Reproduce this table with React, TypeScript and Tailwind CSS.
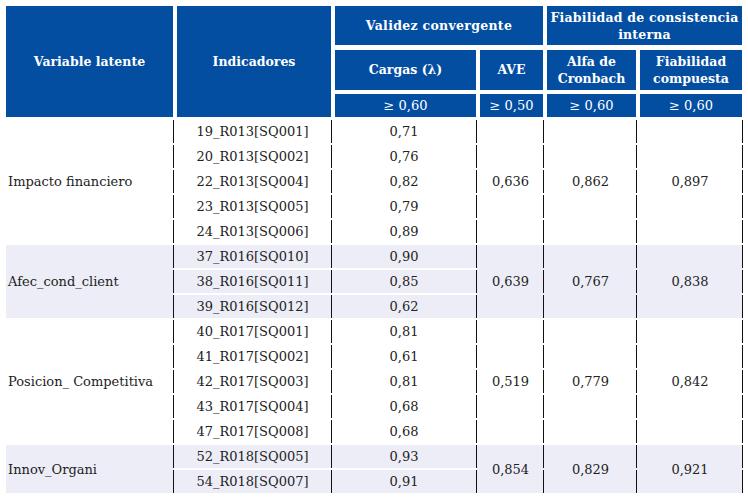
import React from "react";

type Group = {
  name: string;
  items: [string, string][];
  ave: string;
  alfa: string;
  fc: string;
  shaded: boolean;
};

const groups: Group[] = [
  {
    name: "Impacto financiero",
    items: [
      ["19_R013[SQ001]", "0,71"],
      ["20_R013[SQ002]", "0,76"],
      ["22_R013[SQ004]", "0,82"],
      ["23_R013[SQ005]", "0,79"],
      ["24_R013[SQ006]", "0,89"],
    ],
    ave: "0,636",
    alfa: "0,862",
    fc: "0,897",
    shaded: false,
  },
  {
    name: "Afec_cond_client",
    items: [
      ["37_R016[SQ010]", "0,90"],
      ["38_R016[SQ011]", "0,85"],
      ["39_R016[SQ012]", "0,62"],
    ],
    ave: "0,639",
    alfa: "0,767",
    fc: "0,838",
    shaded: true,
  },
  {
    name: "Posicion_ Competitiva",
    items: [
      ["40_R017[SQ001]", "0,81"],
      ["41_R017[SQ002]", "0,61"],
      ["42_R017[SQ003]", "0,81"],
      ["43_R017[SQ004]", "0,68"],
      ["47_R017[SQ008]", "0,68"],
    ],
    ave: "0,519",
    alfa: "0,779",
    fc: "0,842",
    shaded: false,
  },
  {
    name: "Innov_Organi",
    items: [
      ["52_R018[SQ005]", "0,93"],
      ["54_R018[SQ007]", "0,91"],
    ],
    ave: "0,854",
    alfa: "0,829",
    fc: "0,921",
    shaded: true,
  },
];

const spanCls: Record<number, string> = {
  2: "row-span-2",
  3: "row-span-3",
  5: "row-span-5",
};

const dashLine =
  "bg-[image:repeating-linear-gradient(to_bottom,#111_0px,#111_23px,transparent_23px,transparent_25px)] bg-[length:1px_100%] bg-right bg-no-repeat";

const hdr =
  "bg-[#044ea2] text-white flex items-center justify-center text-center";
const hdrBold = "font-bold text-[12.5px] leading-[17px]";

export default function App() {
  return (
    <div
      className="w-[748px] h-[498px] bg-white pl-[6px] pt-[6px]"
      style={{ fontFamily: '"DejaVu Serif", serif' }}
    >
      <div className="grid grid-cols-[167px_154px_141px_63px_89px_102px] grid-rows-[39px_40px_23px] gap-x-[4px] gap-y-[4.5px]">
        <div className={`${hdr} ${hdrBold} row-span-3`}>Variable latente</div>
        <div className={`${hdr} ${hdrBold} row-span-3`}>Indicadores</div>
        <div className={`${hdr} ${hdrBold} col-span-2 tracking-[0.3px]`}>Validez convergente</div>
        <div className={`${hdr} ${hdrBold} col-span-2 tracking-[0.2px]`}>
          Fiabilidad de consistencia
          <br />
          interna
        </div>
        <div className={`${hdr} ${hdrBold}`}>Cargas (λ)</div>
        <div className={`${hdr} ${hdrBold}`}>AVE</div>
        <div className={`${hdr} ${hdrBold}`}>
          Alfa de
          <br />
          Cronbach
        </div>
        <div className={`${hdr} ${hdrBold}`}>
          Fiabilidad
          <br />
          compuesta
        </div>
        <div className={`${hdr} text-[13px]`}>≥ 0,60</div>
        <div className={`${hdr} text-[13px]`}>≥ 0,50</div>
        <div className={`${hdr} text-[13px]`}>≥ 0,60</div>
        <div className={`${hdr} text-[13px]`}>≥ 0,60</div>
      </div>

      <div className="mt-[3px] grid grid-cols-[168px_158px_145px_67px_93px_106px] auto-rows-[23px] gap-y-[2px] text-[13px] text-[#222]">
        {groups.map((g) => {
          const n = g.items.length;
          const bg = g.shaded ? "bg-[#ededf7]" : "bg-white";
          const span = spanCls[n];
          return (
            <React.Fragment key={g.name}>
              <div className={`${span} ${bg} ${dashLine} flex items-center pl-[2px] pt-[1px]`}>
                {g.name}
              </div>
              {g.items.map(([ind, c], i) => (
                <React.Fragment key={ind}>
                  <div className={`${bg} border-r border-[#111] flex items-center justify-center pt-[1px]`}>
                    {ind}
                  </div>
                  <div className={`${bg} border-r border-[#111] flex items-center justify-center pt-[1px]`}>
                    {c}
                  </div>
                  {i === 0 && (
                    <>
                      <div className={`${span} ${bg} ${dashLine} flex items-center justify-center pt-[1px]`}>
                        {g.ave}
                      </div>
                      <div className={`${span} ${bg} ${dashLine} flex items-center justify-center pt-[1px]`}>
                        {g.alfa}
                      </div>
                      <div className={`${span} ${bg} ${dashLine} flex items-center justify-center pt-[1px]`}>
                        {g.fc}
                      </div>
                    </>
                  )}
                </React.Fragment>
              ))}
            </React.Fragment>
          );
        })}
      </div>
    </div>
  );
}
